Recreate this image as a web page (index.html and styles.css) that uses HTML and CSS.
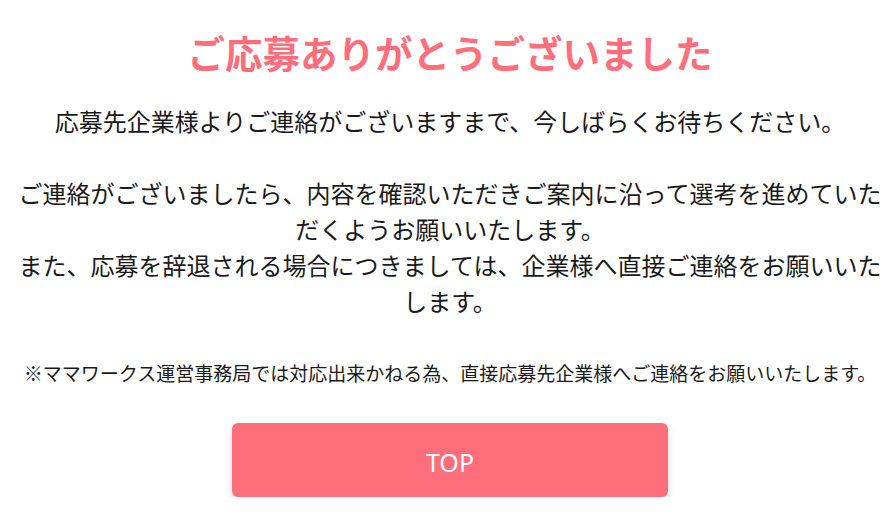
FILE: index.html
```html
<!DOCTYPE html>
<html lang="ja">
<head>
  <meta charset="UTF-8">
  <meta name="viewport" content="width=device-width, initial-scale=1.0">
  <title>応募完了</title>
  <link rel="stylesheet" href="styles.css">
</head>
<body>
  <div class="container">
    <h1 class="thanks-title">ご応募ありがとうございました</h1>
    <p class="thanks-text">
      応募先企業様よりご連絡がございますまで、今しばらくお待ちください。<br>
      <br>
      ご連絡がございましたら、内容を確認いただきご案内に沿って選考を進めていただくようお願いいたします。<br>
      また、応募を辞退される場合につきましては、企業様へ直接ご連絡をお願いいたします。
    </p>
    <p class="note">※ママワークス運営事務局では対応出来かねる為、直接応募先企業様へご連絡をお願いいたします。</p>
    <a class="top-button" href="#">TOP</a>
  </div>
</body>
</html>
```

FILE: styles.css
```css
body {
  font-family: "Noto Sans CJK JP", "Noto Sans", sans-serif;
  margin: 0;
  padding: 0;
  background-color: #fff;
  color: #1a1a1a;
}
.container {
  padding: 0 0 0 15px;
  text-align: center;
}
.thanks-title {
  margin: 25px 0 0;
  font-size: 37.5px;
  line-height: 54px;
  font-weight: bold;
  color: #ff6e7a;
}
.thanks-text {
  margin: 24px 0 0;
  font-size: 24px;
  line-height: 36px;
}
.note {
  margin: 40px 0 0;
  font-size: 19px;
  line-height: 28px;
}
.top-button {
  display: flex;
  justify-content: center;
  align-items: center;
  box-sizing: border-box;
  width: 436px;
  height: 74px;
  padding-top: 4px;
  margin: 36px auto 0;
  background-color: #ff6e7a;
  color: #fff;
  font-family: "Noto Sans", sans-serif;
  font-size: 25px;
  text-decoration: none;
  border-radius: 6px;
  box-shadow: 0 4px 8px rgba(0, 0, 0, 0.15);
}
```
